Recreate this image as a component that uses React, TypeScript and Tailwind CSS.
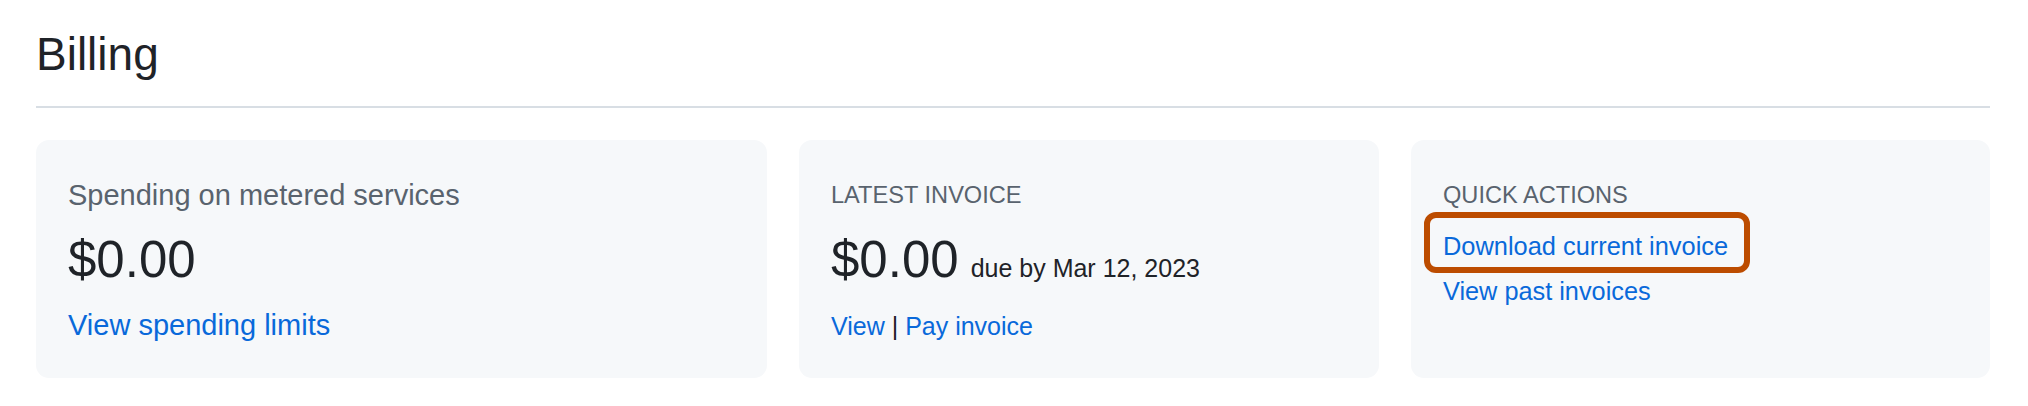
import React from "react";

const font = { fontFamily: '"Liberation Sans", Arial, sans-serif' };

const Card: React.FC<{ className?: string; children: React.ReactNode }> = ({ className, children }) => (
    <div className={`bg-[#f6f8fa] rounded-[13px] h-[238px] px-8 ${className ?? ""}`}>{children}</div>
);

export default function App() {
    return (
        <div className="bg-white w-[2028px] h-[406px] pl-9 pr-[38px] pt-[26px] text-[#1f2328]" style={font}>
            <h2 className="text-[46px] leading-[56px] pb-6 border-b-2 border-[#d8dee4]">Billing</h2>

            <div className="flex gap-8 mt-8">
                <Card className="w-[731px] pt-[37px]">
                    <div className="text-[29px] leading-[36px] text-[#59636e]">Spending on metered services</div>
                    <div className="text-[51px] leading-[60px] mt-[17px]">$0.00</div>
                    <a className="block text-[29px] leading-[36px] mt-[17px] text-[#0969da]">View spending limits</a>
                </Card>

                <Card className="w-[580px] pt-[40px]">
                    <div className="text-[23.6px] leading-[30px] text-[#59636e] uppercase">Latest invoice</div>
                    <div className="flex items-baseline mt-5 h-[60px] leading-[60px]">
                        <span className="text-[51px]">$0.00</span>
                        <span className="text-[25px] ml-3">due by Mar 12, 2023</span>
                    </div>
                    <div className="text-[25px] leading-[32px] mt-5">
                        <a className="text-[#0969da]">View</a> | <a className="text-[#0969da]">Pay invoice</a>
                    </div>
                </Card>

                <Card className="flex-1 pt-[40px]">
                    <div className="text-[23.6px] leading-[30px] text-[#59636e] uppercase">Quick actions</div>
                    <div className="mt-5 text-[25.4px] leading-[32px]">
                        <span className="relative inline-block">
                            <a className="text-[#0969da]">Download current invoice</a>
                            <span className="absolute -left-[19px] -right-[22px] -top-[18px] -bottom-[11px] border-[6px] border-[#bc4c00] rounded-[12px]" />
                        </span>
                    </div>
                    <a className="block mt-[13px] text-[25.3px] leading-[32px] text-[#0969da]">View past invoices</a>
                </Card>
            </div>
        </div>
    );
}
